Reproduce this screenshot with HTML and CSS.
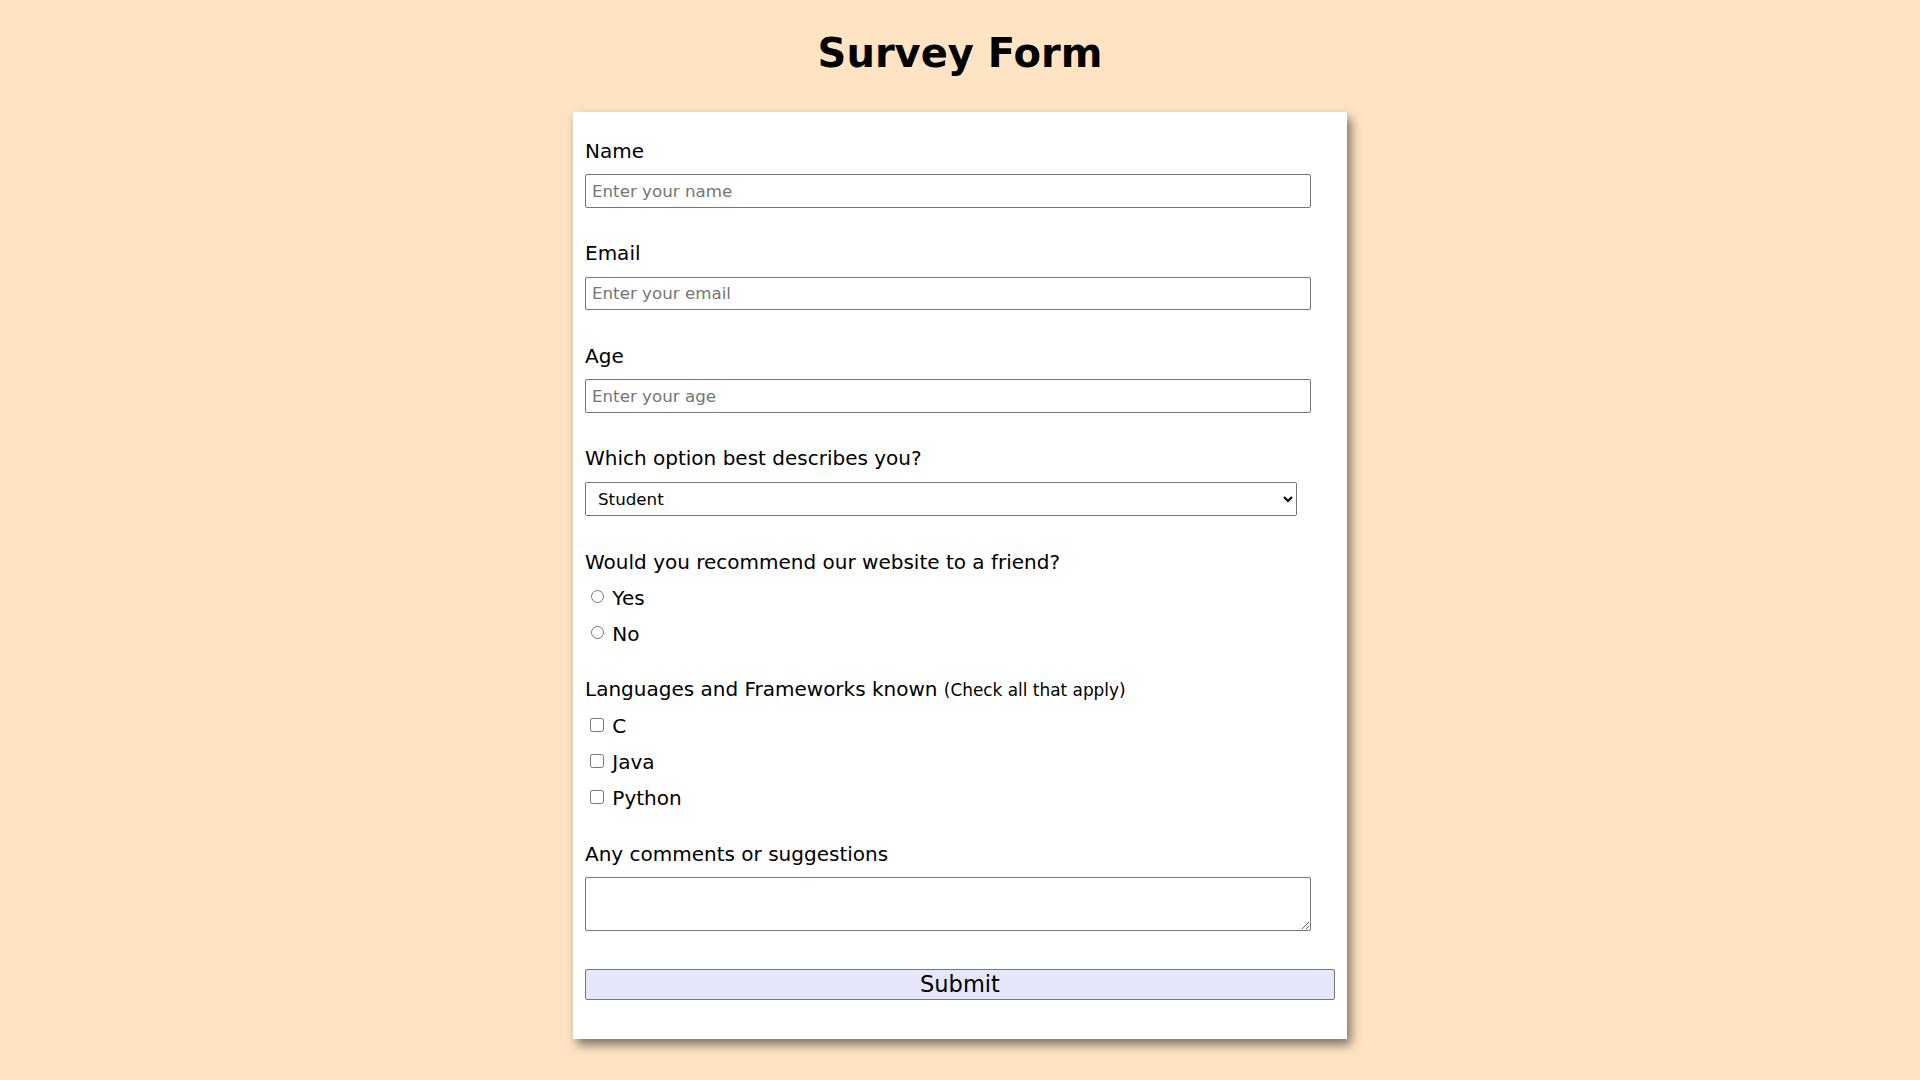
FILE: index.html
```html
<!DOCTYPE html>
<html lang="en">
<head>
<meta charset="utf-8">
<title>Survey Form</title>
<link rel="stylesheet" href="styles.css">
</head>
<body>
<h1 class="title">Survey Form</h1>
<form class="survey">
  <div class="field">
    <label class="lbl" for="name">Name</label>
    <input class="txt" id="name" type="text" placeholder="Enter your name">
  </div>
  <div class="field">
    <label class="lbl" for="email">Email</label>
    <input class="txt" id="email" type="email" placeholder="Enter your email">
  </div>
  <div class="field">
    <label class="lbl" for="age">Age</label>
    <input class="txt" id="age" type="text" placeholder="Enter your age">
  </div>
  <div class="field">
    <label class="lbl" for="role">Which option best describes you?</label>
    <select class="sel" id="role">
      <option>Student</option>
      <option>Full Time Job</option>
      <option>Prefer not to say</option>
    </select>
  </div>
  <div class="field field-opts">
    <p class="lbl">Would you recommend our website to a friend?</p>
    <label class="opt"><input class="radio" type="radio" name="rec"> Yes</label>
    <label class="opt"><input class="radio" type="radio" name="rec"> No</label>
  </div>
  <div class="field field-opts">
    <p class="lbl">Languages and Frameworks known <span class="hint">(Check all that apply)</span></p>
    <label class="opt"><input class="check" type="checkbox"> C</label>
    <label class="opt"><input class="check" type="checkbox"> Java</label>
    <label class="opt"><input class="check" type="checkbox"> Python</label>
  </div>
  <div class="field field-last">
    <label class="lbl" for="comments">Any comments or suggestions</label>
    <textarea class="area" id="comments"></textarea>
  </div>
  <button class="submit" type="submit">Submit</button>
</form>
</body>
</html>
```

FILE: styles.css
```css
html, body {
  margin: 0;
  padding: 0;
}

body {
  background: #ffe4c4;
  font-family: "DejaVu Sans", Verdana, sans-serif;
  color: #000;
  padding-bottom: 40px;
}

.title {
  margin: 30px 0 0;
  font-size: 40px;
  line-height: 47px;
  font-weight: bold;
  text-align: center;
}

.survey {
  width: 750px;
  margin: 35px auto 0;
  padding: 26.5px 12px 39px;
  background: #fff;
  box-shadow: 4px 6px 10px rgba(0, 0, 0, 0.5);
}

.field {
  margin-bottom: 33.5px;
}

.field-opts {
  margin-bottom: 31.5px;
}

.field-last {
  margin-bottom: 38px;
}

.lbl {
  display: block;
  margin: 0 0 11.5px;
  font-size: 20px;
  line-height: 24px;
}

.field-opts .lbl {
  margin-bottom: 0;
}

.hint {
  font-size: 16.9px;
}

.txt {
  display: block;
  box-sizing: border-box;
  width: 726px;
  height: 33.5px;
  margin: 0;
  padding: 0 6px;
  border: 1px solid #767676;
  border-radius: 2px;
  font-family: "DejaVu Sans", Verdana, sans-serif;
  font-size: 16.7px;
  color: #000;
  background: #fff;
}

.txt::placeholder {
  color: #757575;
}

.sel {
  display: block;
  box-sizing: border-box;
  width: 712px;
  height: 34.5px;
  margin: 0;
  padding: 0 8px;
  font-family: "DejaVu Sans", Verdana, sans-serif;
  font-size: 16.7px;
  color: #000;
}

.opt {
  display: block;
  margin-top: 12px;
  font-size: 20px;
  line-height: 24px;
}

.radio {
  width: 13px;
  height: 13px;
  margin: 0 2px 0 6px;
  vertical-align: 2px;
}

.check {
  width: 14px;
  height: 14px;
  margin: 0 2px 0 5px;
  vertical-align: 1px;
}

.area {
  display: block;
  box-sizing: border-box;
  width: 726px;
  height: 53.5px;
  margin: 1.5px 0 0;
  border: 1px solid #767676;
  border-radius: 2px;
  font-family: "DejaVu Sans", Verdana, sans-serif;
  font-size: 16px;
}

.submit {
  display: block;
  box-sizing: border-box;
  width: 750px;
  height: 31px;
  margin: 0;
  padding: 0;
  border: 1px solid #767676;
  border-radius: 2px;
  background: #e6e6fa;
  font-family: "DejaVu Sans", Verdana, sans-serif;
  font-size: 22.5px;
  line-height: 27px;
  color: #000;
}
```
